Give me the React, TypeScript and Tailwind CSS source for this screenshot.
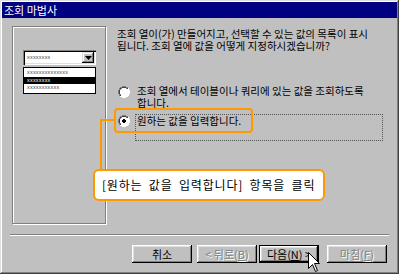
import React from "react";

const FONT = { fontFamily: '"Noto Sans CJK KR", "Noto Sans", sans-serif' };

function Radio({ checked }: { checked?: boolean }) {
  return (
    <svg width="12" height="12" viewBox="0 0 12 12" className="shrink-0">
      <path d="M4 0h4v1h2v1h1v2h1v4h-1v2h-1v1h-2v1h-4v-1h-2v-1h-1v-2h-1v-4h1v-2h1v-1h2z" fill="#fff" />
      <path d="M4 0h4v1h2v1h-2v-1h-4v1h-2v2h-1v4h1v2h-1v-2h-1v-4h1v-2h1v-1h2z" fill="#808080" />
      <path d="M4 1h4v1h2v1h-2v-1h-4v1h-2v-1h2z M2 3h1v1h-1z M1 4h1v4h-1z M2 8h1v2h-1z" fill="#404040" />
      <path d="M10 2h1v2h1v4h-1v2h-1v1h-2v1h-4v-1h4v-1h2v-2h1v-4h-1z" fill="#fff" />
      <rect x="2" y="2" width="8" height="8" rx="4" fill="#fff" />
      {checked && <path d="M5 4h2v1h1v2h-1v1h-2v-1h-1v-2h1z" fill="#000" />}
    </svg>
  );
}

function Btn({
  children,
  disabled,
  def,
  className = "",
}: {
  children: React.ReactNode;
  disabled?: boolean;
  def?: boolean;
  className?: string;
}) {
  return (
    <div
      className={
        "w-[60px] h-[18px] flex items-center justify-center text-[11px] leading-none " +
        (def ? "border border-black " : "") +
        className
      }
    >
      <div
        className={
          "w-full h-full flex items-center justify-center shadow-[inset_-1px_-1px_0_#000,inset_1px_1px_0_#fff,inset_-2px_-2px_0_#808080,inset_2px_2px_0_#dfdfdf] " +
          (disabled ? "text-[#808080] [text-shadow:1px_1px_0_#fff]" : "text-black")
        }
      >
        {children}
      </div>
    </div>
  );
}

function Line({ children }: { children: React.ReactNode }) {
  return <div className="h-[12px] leading-[12px] whitespace-nowrap">{children}</div>;
}

export default function App() {
  return (
    <div className="w-[400px] h-[275px] bg-white relative overflow-hidden" style={FONT}>
      <div className="w-[399px] h-[274px] bg-[#c0c0c0] p-[2px] flex flex-col shadow-[inset_-1px_-1px_0_#404040,inset_1px_1px_0_#dfdfdf,inset_-2px_-2px_0_#808080,inset_2px_2px_0_#fff]">
        {/* title bar */}
        <div className="h-[16px] bg-[#000080] text-white text-[11px] leading-none pl-[2px] flex items-center">
          조회 마법사
        </div>

        {/* body */}
        <div className="flex pl-[10px] pt-[8px] h-[206px]">
          {/* left panel: preview */}
          <div className="w-[94px] h-[198px] border border-[#808080] shadow-[1px_1px_0_#fff,inset_1px_1px_0_#fff] pl-[10px] pt-[23px]">
            <div className="w-[73px] h-[15px] bg-white shadow-[inset_1px_1px_0_#808080,inset_2px_2px_0_#000,inset_-1px_-1px_0_#fff,inset_-2px_-2px_0_#dfdfdf] flex items-center pl-[4px] pr-[2px]">
              <span className="flex-1 text-[5.5px] leading-none text-[#444] tracking-[0.2px]">xxxxxxxx</span>
              <div className="w-[12px] h-[11px] bg-[#c0c0c0] shadow-[inset_-1px_-1px_0_#000,inset_1px_1px_0_#dfdfdf,inset_-2px_-2px_0_#808080,inset_2px_2px_0_#fff] flex items-center justify-center">
                <svg width="7" height="4" viewBox="0 0 7 4">
                  <path d="M0 0h7l-3.5 4z" fill="#000" />
                </svg>
              </div>
            </div>
            <div className="mt-[2px] w-[73px] h-[27px] bg-white border border-black flex flex-col py-[1px]">
              <div className="h-[8px] pl-[3px] flex items-center text-[5.5px] leading-none text-[#444] tracking-[0.2px]">
                xxxxxxxxxxxxxx
              </div>
              <div className="h-[8px] pl-[3px] flex items-center bg-black text-[5.5px] leading-none text-white tracking-[0.2px]">
                xxxxxxxx
              </div>
              <div className="h-[8px] pl-[3px] flex items-center text-[5.5px] leading-none text-[#444] tracking-[0.2px]">
                xxxxxxxxxxx
              </div>
            </div>
          </div>

          {/* right content */}
          <div className="ml-[11px] pt-[2px] flex flex-col w-[272px] text-[10.5px] text-black">
            <div>
              <Line>조회 열이(가) 만들어지고, 선택할 수 있는 값의 목록이 표시</Line>
              <Line>됩니다. 조회 열에 값을 어떻게 지정하시겠습니까?</Line>
            </div>
            <div className="mt-[33px] flex items-start">
              <div className="ml-[1px] pt-[1px]">
                <Radio />
              </div>
              <div className="ml-[7px]">
                <Line>조회 열에서 테이블이나 쿼리에 있는 값을 조회하도록</Line>
                <Line>합니다.</Line>
              </div>
            </div>
            <div className="mt-[5px] flex items-start">
              <div className="ml-[1px] pt-[1px]">
                <Radio checked />
              </div>
              <div className="ml-[5px] w-[248px] h-[27px] border border-dotted border-[#555] pl-[1px]">
                <Line>원하는 값을 입력합니다.</Line>
              </div>
            </div>
          </div>
        </div>

        {/* separator */}
        <div className="mx-[8px] mt-[10px] h-[2px] border-t border-[#808080] border-b border-b-white" />

        {/* buttons */}
        <div className="mt-[9px] flex justify-end pr-[10px]">
          <Btn>취소</Btn>
          <Btn disabled className="ml-[5px]">
            &lt; 뒤로(<span className="underline">B</span>)
          </Btn>
          <Btn def className="ml-[2px]">
            다음(<span className="underline">N</span>) &gt;
          </Btn>
          <Btn disabled className="ml-[8px]">
            마침(<span className="underline">F</span>)
          </Btn>
        </div>
      </div>

      {/* annotation: highlight box */}
      <div className="absolute left-[114px] top-[108px] w-[139px] h-[25px] border-2 border-[#ff9900] rounded-[4px]" />
      {/* connector */}
      <div className="absolute left-[101px] top-[119px] w-[13px] h-[2px] bg-[#ff9900]" />
      <div className="absolute left-[100px] top-[119px] w-[2px] h-[51px] bg-[#ff9900]" />
      {/* callout */}
      <div className="absolute left-[93px] top-[169px] w-[232px] h-[32px] border-2 border-[#ff9900] rounded-[6px] bg-white flex items-center pl-[7px] text-[12px] leading-none text-black tracking-[0.8px] [word-spacing:3px]">
        [원하는 값을 입력합니다] 항목을 클릭
      </div>

      {/* mouse cursor */}
      <svg className="absolute left-[308px] top-[252px]" width="12" height="20" viewBox="0 0 12 20">
        <path
          d="M0.5 0.5 L0.5 16.5 L4.5 12.5 L7.5 19.5 L9.5 18.5 L6.5 11.5 L11.5 11.5 Z"
          fill="#fff"
          stroke="#000"
          strokeWidth="1"
        />
      </svg>
    </div>
  );
}
